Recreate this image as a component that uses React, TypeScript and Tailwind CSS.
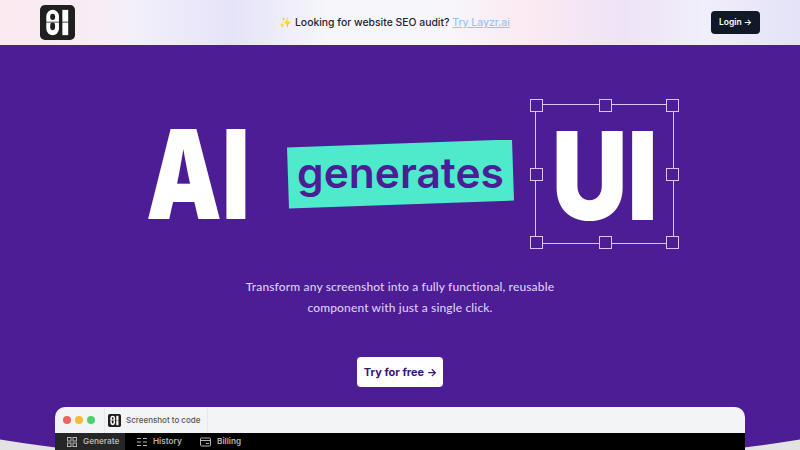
function Logo({ size }: { size: number }) {
  return (
    <svg width={size} height={size} viewBox="0 0 36 36" aria-hidden="true">
      <rect width="36" height="36" rx="5" fill="#1f1f1f" />
      <rect x="6.5" y="5" width="13" height="26" rx="6.5" fill="#fff" />
      <rect x="10.5" y="9" width="5" height="6.5" rx="2.5" fill="#1f1f1f" />
      <rect x="10.5" y="18" width="5" height="8" rx="2.5" fill="#1f1f1f" />
      <rect x="23" y="5" width="6" height="26" fill="#fff" />
      <rect x="2" y="17.2" width="32" height="0.8" fill="#1f1f1f" />
    </svg>
  );
}

function Handle() {
  return <div className="h-[13px] w-[13px] border border-[#d8c6f5] bg-[#4c1d95]" />;
}

function Tab({ icon, label, active, width }: { icon: React.ReactNode; label: string; active?: boolean; width: string }) {
  return (
    <div className={`flex h-full items-center gap-[6px] pl-[12px] text-[8.2px] font-semibold text-[#b5b5b5] ${width} ${active ? "bg-[#262626]" : ""}`}>
      {icon}
      <span>{label}</span>
    </div>
  );
}

export default function App() {
  return (
    <div className="relative h-[450px] w-[800px] overflow-hidden bg-[#e3e3e3] font-['Inter',sans-serif]">
      <div className="absolute left-[-30%] top-0 h-[468px] w-[160%] rounded-b-[50%_130px] bg-[#4c1d95]" />
      <div className="relative flex h-[450px] flex-col">
        <header className="flex h-[45px] shrink-0 items-center justify-between bg-[linear-gradient(90deg,#fbeaf0_0%,#f8ecf5_12%,#f3f0fa_17%,#e5e3f8_29%,#f6f6fb_41%,#f8f6fb_56%,#fbeaf2_66%,#eee3f6_78%,#f1effa_88%,#e3e2f8_100%)] px-[40px]">
          <Logo size={35} />
          <div className="pl-[3px] text-[10.4px] font-medium text-[#1f2430]">
            ✨ Looking for website SEO audit? <span className="text-[#93c5fd] underline">Try Layzr.ai</span>
          </div>
          <div className="flex h-[23px] w-[49px] items-center justify-center rounded-[4px] bg-[#111827] text-[8.5px] font-semibold text-white">Login →</div>
        </header>

        <section className="flex shrink-0 flex-col items-center">
          <div className="mt-[59px] flex h-[140px] w-full items-center pl-[147px]">
            <div className="w-[100px] text-center text-[124px] leading-none font-black text-white">
              <span className="inline-block origin-left scale-x-[0.77] -translate-x-[1px]">AI</span>
            </div>
            <div className="ml-[40px] flex h-[69px] w-[227px] items-center justify-center bg-[#4eeacb] pb-[2px] text-[42.5px] font-semibold text-[#4c1d95] [clip-path:polygon(0_8px,225px_0,227px_61px,2px_69px)]">generates</div>
            <div className="relative ml-[21px] flex h-[140px] w-[139px] items-center justify-center border border-[#d8c6f5]">
              <span className="inline-block scale-x-[0.86] pt-[3px] text-[122px] leading-none font-black text-white">UI</span>
              <div className="absolute -top-[6px] -left-[6px]"><Handle /></div>
              <div className="absolute -top-[6px] left-[63px]"><Handle /></div>
              <div className="absolute -top-[6px] -right-[6px]"><Handle /></div>
              <div className="absolute top-[63px] -left-[6px]"><Handle /></div>
              <div className="absolute top-[63px] -right-[6px]"><Handle /></div>
              <div className="absolute -bottom-[6px] -left-[6px]"><Handle /></div>
              <div className="absolute -bottom-[6px] left-[63px]"><Handle /></div>
              <div className="absolute -bottom-[6px] -right-[6px]"><Handle /></div>
            </div>
          </div>
          <p className="mt-[32px] text-center font-['Lato',sans-serif] text-[12px] leading-[21px] font-medium tracking-[0.012em] whitespace-nowrap text-[#ddcff5]">
            Transform any screenshot into a fully functional, reusable<br />component with just a single click.
          </p>
          <div className="mt-[39px] flex h-[30px] w-[86px] items-center justify-center rounded-[4px] bg-white pl-[1px] text-[11px] font-bold text-[#3b1578]">Try for free →</div>
        </section>

        <div className="mx-[55px] mt-[20px] min-h-0 flex-1 overflow-hidden rounded-t-[10px] bg-[#f3f4f6]">
          <div className="flex h-[26px] items-center pl-[8px]">
            <span className="h-[8px] w-[8px] rounded-full bg-[#f0625e]" />
            <span className="ml-[4px] h-[8px] w-[8px] rounded-full bg-[#f5bd30]" />
            <span className="ml-[4px] h-[8px] w-[8px] rounded-full bg-[#4fcf6e]" />
            <div className="ml-[9px] flex h-full items-center gap-[5px] border-x border-[#e8e8ec] pr-[7px] pl-[3px] text-[8px] font-medium text-[#555]">
              <Logo size={13} />
              <span>Screenshot to code</span>
            </div>
          </div>
          <div className="flex h-[17px] bg-black">
            <Tab active width="w-[70px]" label="Generate" icon={<svg width="10" height="10" viewBox="0 0 10 10" fill="none" stroke="#b5b5b5"><rect x=".5" y=".5" width="3.5" height="3.5"/><rect x="6" y=".5" width="3.5" height="3.5"/><rect x=".5" y="6" width="3.5" height="3.5"/><rect x="6" y="6" width="3.5" height="3.5"/></svg>} />
            <Tab width="w-[63px]" label="History" icon={<svg width="10" height="10" viewBox="0 0 10 10" fill="none" stroke="#b5b5b5"><path d="M0 1.5h4M0 5h4M0 8.5h4M6 1.5h4M6 5h4M6 8.5h4"/></svg>} />
            <Tab width="w-[60px]" label="Billing" icon={<svg width="11" height="10" viewBox="0 0 11 10" fill="none" stroke="#b5b5b5"><rect x=".5" y="1" width="10" height="8" rx="1"/><path d="M.5 3.5h10M6 6.5h3"/></svg>} />
          </div>
        </div>
      </div>
    </div>
  );
}
